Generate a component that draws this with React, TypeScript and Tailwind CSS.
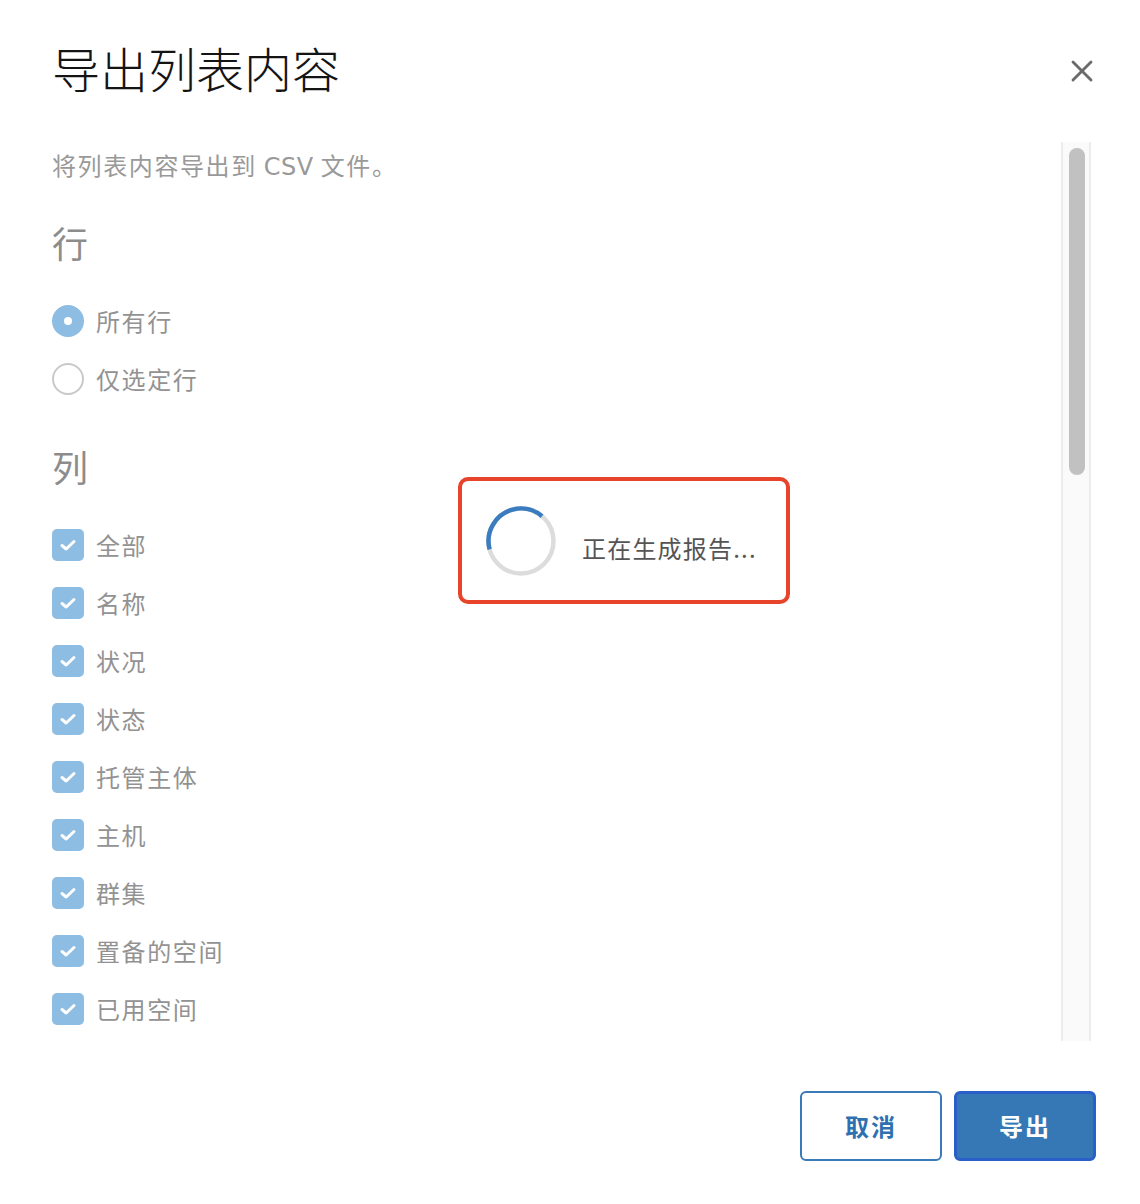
import { X } from 'lucide-react';

const columns = ['全部', '名称', '状况', '状态', '托管主体', '主机', '群集', '置备的空间', '已用空间'];

function Radio({ checked, label }: { checked?: boolean; label: string }) {
  return (
    <div className="flex h-[58px] items-center gap-[12px]">
      {checked ? (
        <span className="flex h-[32px] w-[32px] items-center justify-center rounded-full bg-[#8dbde3]">
          <span className="h-[8px] w-[8px] rounded-full bg-white" />
        </span>
      ) : (
        <span className="h-[32px] w-[32px] rounded-full border-2 border-[#c9c9c9] bg-white" />
      )}
      <span className="text-[24px] leading-[32px] tracking-[1.6px] text-[#929292]">{label}</span>
    </div>
  );
}

function Checkbox({ label }: { label: string }) {
  return (
    <div className="flex h-[58px] items-center gap-[12px]">
      <span className="flex h-[32px] w-[32px] items-center justify-center rounded-[5px] bg-[#8dbde3]">
        <svg width="18" height="14" viewBox="0 0 18 14" fill="none">
          <path d="M3 7.5 L7.2 11 L15 3.5" stroke="white" strokeWidth="3" strokeLinecap="round" strokeLinejoin="round" />
        </svg>
      </span>
      <span className="text-[24px] leading-[32px] tracking-[1.6px] text-[#929292]">{label}</span>
    </div>
  );
}

function Spinner() {
  // gray ring with a blue arc from ~8 o'clock to ~1 o'clock
  const r = 32.5;
  const c = 2 * Math.PI * r;
  const arc = (145 / 360) * c;
  return (
    <svg width="70" height="70" viewBox="0 0 70 70">
      <circle cx="35" cy="35" r={r} fill="none" stroke="#dcdcdc" strokeWidth="4.5" />
      <circle
        cx="35"
        cy="35"
        r={r}
        fill="none"
        stroke="#3a7cbf"
        strokeWidth="4.5"
        strokeDasharray={`${arc} ${c}`}
        transform="rotate(165 35 35)"
      />
    </svg>
  );
}

export default function App() {
  return (
    <div className="relative flex h-[1204px] w-[1140px] flex-col bg-white font-['Noto_Sans_CJK_SC','Noto_Sans',sans-serif]">
      {/* Header */}
      <div className="flex h-[142px] shrink-0 items-start justify-between pl-[52px] pr-[40px] pt-[37px]">
        <h1 className="text-[48px] font-light leading-[60px] text-[#141414]">导出列表内容</h1>
        <button className="mt-[16px] text-[#6b6b6b]">
          <X size={36} strokeWidth={1.9} />
        </button>
      </div>

      {/* Body */}
      <div className="flex h-[899px] shrink-0 pl-[52px] pr-[49px]">
        <div className="flex-1 overflow-hidden pt-[7px]">
          <p className="h-[32px] text-[24px] leading-[32px] tracking-[1.6px] text-[#999999]">
            将列表内容导出到 <span className="font-['DejaVu_Sans',sans-serif] tracking-[0.5px]">CSV</span> 文件。
          </p>

          <h2 className="mt-[37px] text-[36px] leading-[48px] text-[#8c8c8c]">行</h2>
          <div className="mt-[26px]">
            <Radio checked label="所有行" />
            <Radio label="仅选定行" />
          </div>

          <h2 className="mt-[34px] text-[36px] leading-[48px] text-[#8c8c8c]">列</h2>
          <div className="mt-[26px]">
            {columns.map((c) => (
              <Checkbox key={c} label={c} />
            ))}
          </div>
        </div>

        {/* Scrollbar */}
        <div className="relative w-[30px] border-x-2 border-[#ececec] bg-[#fafafa]">
          <div className="absolute left-[6px] top-[6px] h-[327px] w-[16px] rounded-full bg-[#c1c1c1]" />
        </div>
      </div>

      {/* Footer */}
      <div className="flex justify-end gap-[12px] pr-[44px] pt-[50px]">
        <button className="h-[70px] w-[142px] rounded-[6px] border-2 border-[#3a7ab8] bg-white text-[24px] font-bold tracking-[2px] text-[#2f70b0]">
          取消
        </button>
        <button className="h-[70px] w-[142px] rounded-[6px] border-[3px] border-[#2a5fc9] bg-[#3677b5] text-[24px] font-bold tracking-[2px] text-white">
          导出
        </button>
      </div>

      {/* Loading overlay */}
      <div className="absolute left-[458px] top-[477px] flex h-[127px] w-[332px] items-center rounded-[10px] border-4 border-[#e8432b] bg-white pl-[24px]">
        <Spinner />
        <span className="ml-[26px] mt-[14px] text-[24px] leading-[32px] tracking-[1.2px] text-[#555555]">正在生成报告...</span>
      </div>
    </div>
  );
}
